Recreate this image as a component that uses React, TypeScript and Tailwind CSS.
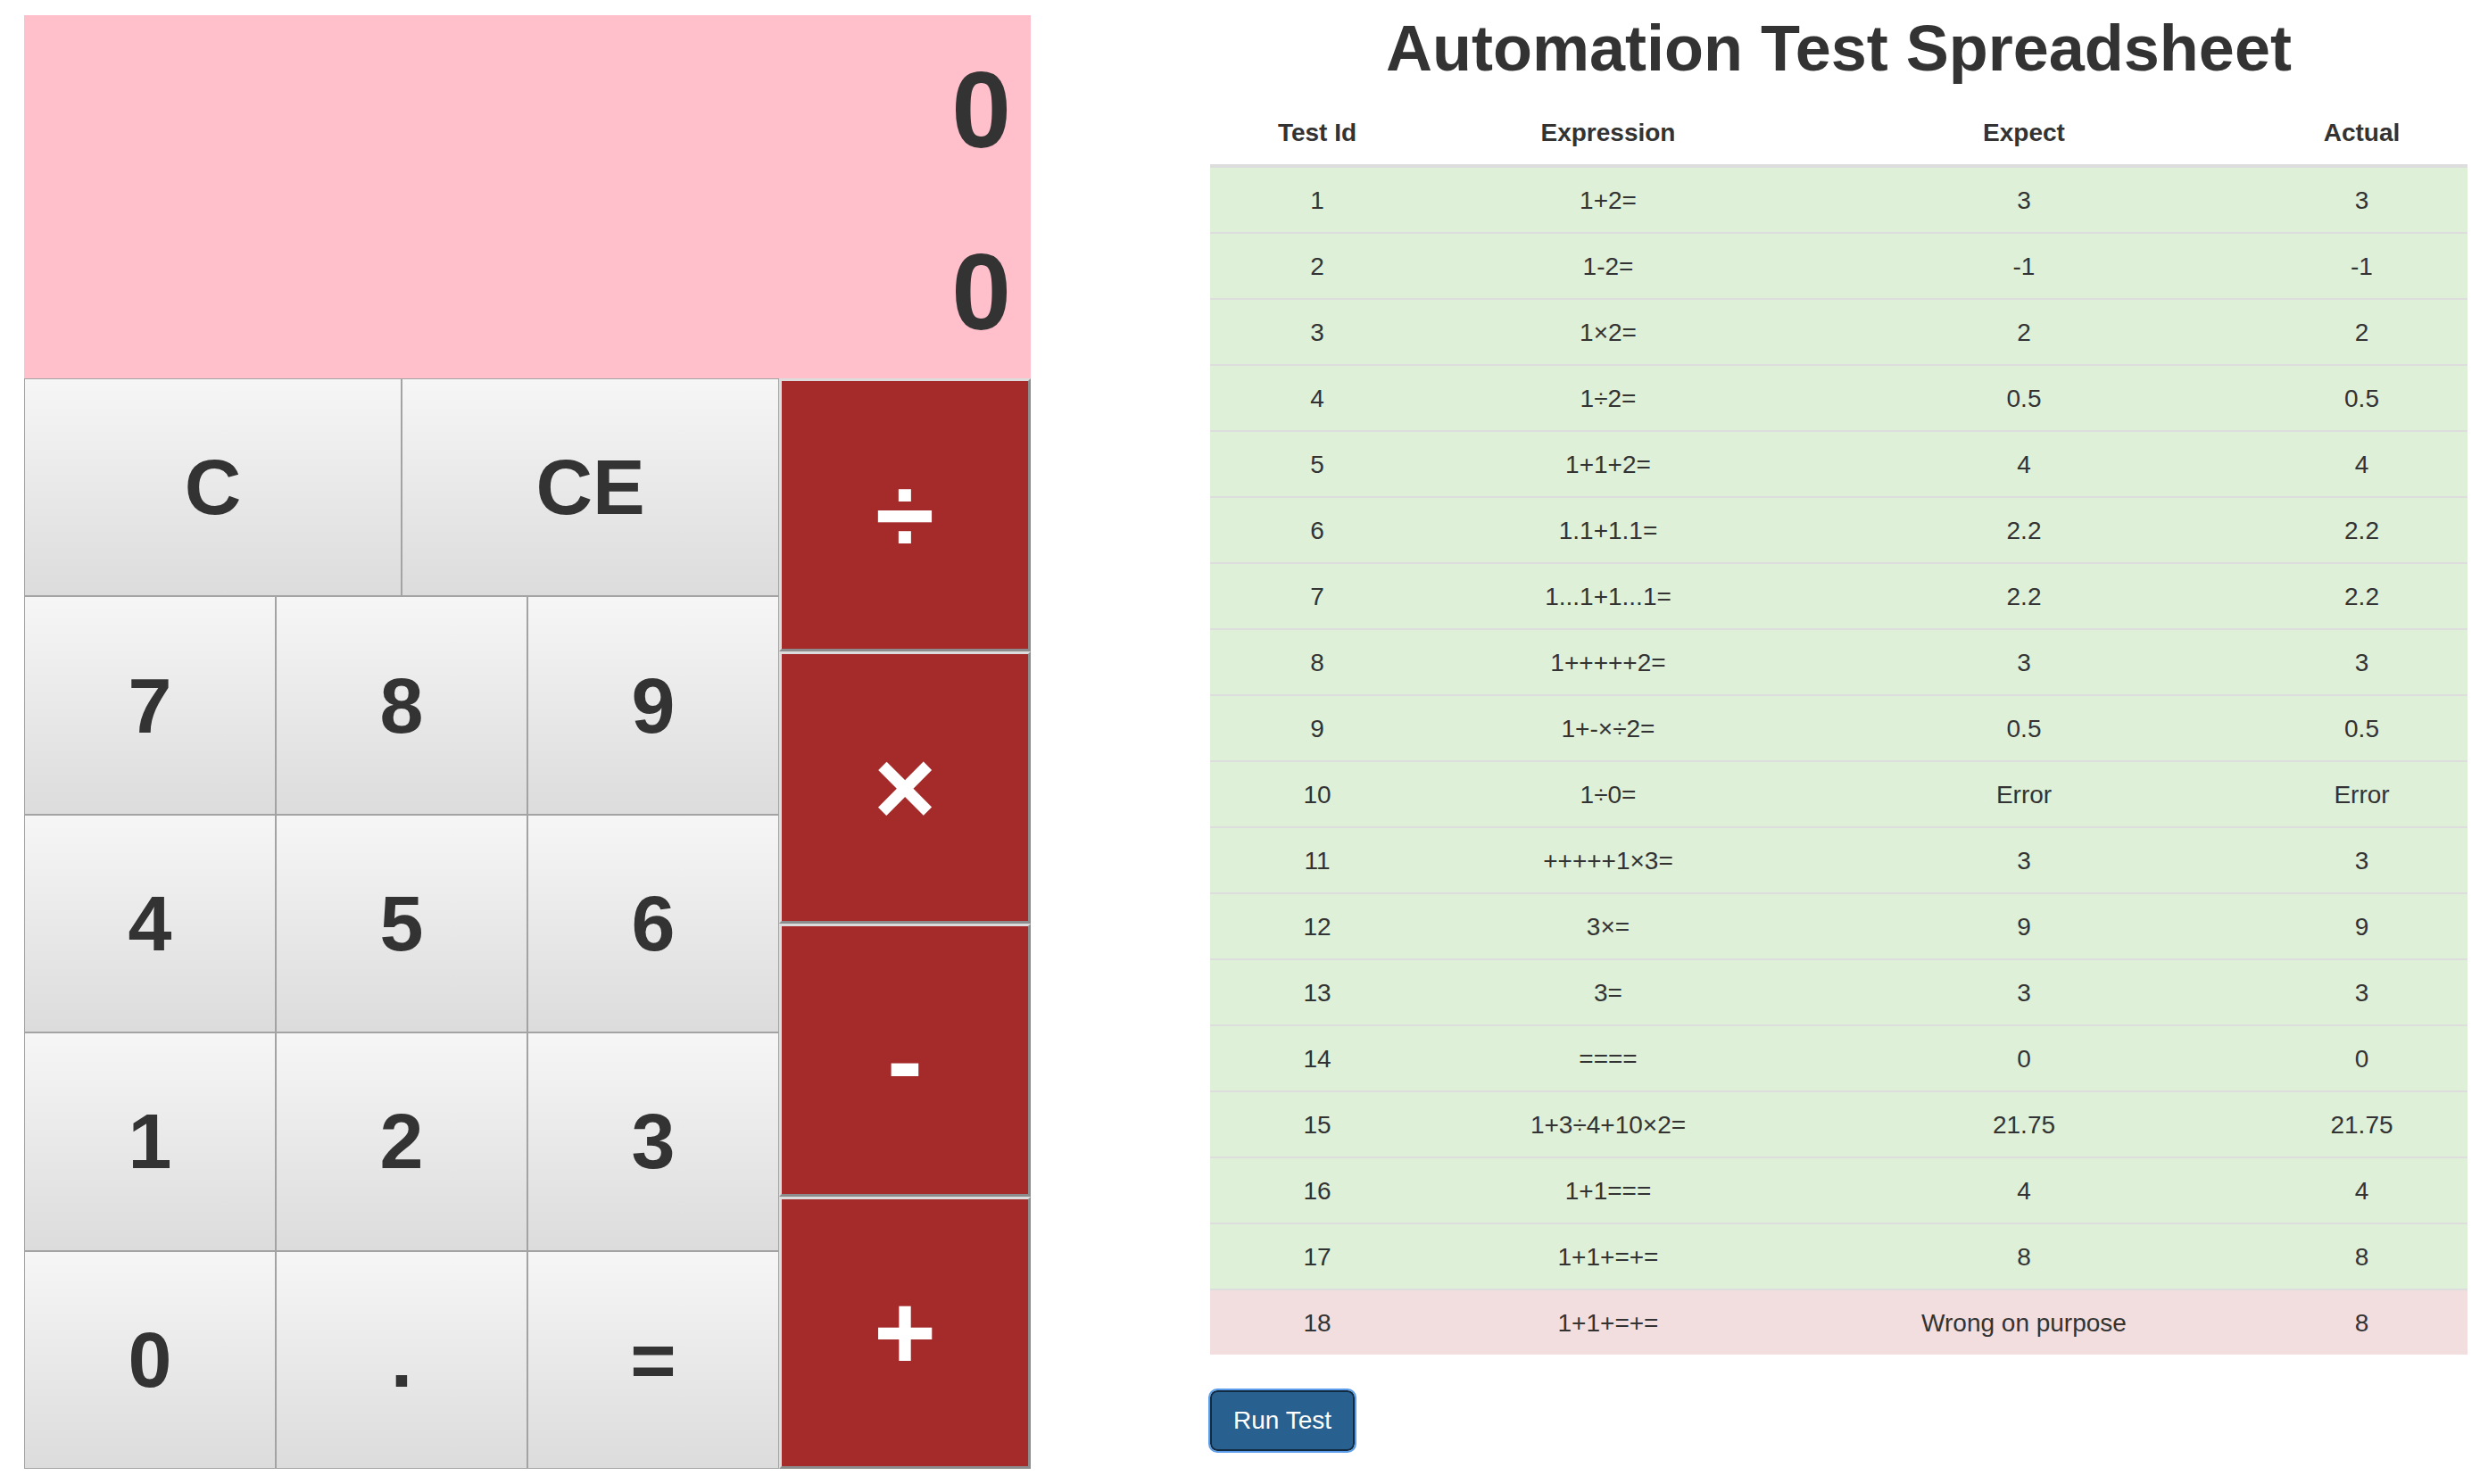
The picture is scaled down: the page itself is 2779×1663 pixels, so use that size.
const TESTS = [
  ['1', '1+2=', '3', '3'],
  ['2', '1-2=', '-1', '-1'],
  ['3', '1×2=', '2', '2'],
  ['4', '1÷2=', '0.5', '0.5'],
  ['5', '1+1+2=', '4', '4'],
  ['6', '1.1+1.1=', '2.2', '2.2'],
  ['7', '1...1+1...1=', '2.2', '2.2'],
  ['8', '1+++++2=', '3', '3'],
  ['9', '1+-×÷2=', '0.5', '0.5'],
  ['10', '1÷0=', 'Error', 'Error'],
  ['11', '+++++1×3=', '3', '3'],
  ['12', '3×=', '9', '9'],
  ['13', '3=', '3', '3'],
  ['14', '====', '0', '0'],
  ['15', '1+3÷4+10×2=', '21.75', '21.75'],
  ['16', '1+1===', '4', '4'],
  ['17', '1+1+=+=', '8', '8'],
  ['18', '1+1+=+=', 'Wrong on purpose', '8'],
];

const KEYS = [
  { label: 'C', wide: true },
  { label: 'CE', wide: true },
  { label: '7' },
  { label: '8' },
  { label: '9' },
  { label: '4' },
  { label: '5' },
  { label: '6' },
  { label: '1' },
  { label: '2' },
  { label: '3' },
  { label: '0' },
  { label: '.' },
  { label: '=' },
];

const OPERATORS = ['÷', '×', '-', '+'];

function Calculator() {
  return (
    <div className="w-[1128px] shrink-0 mt-[17px]">
      <div className="h-[407px] bg-[#ffc0cb] pt-[4px] pr-[22px] text-right text-[120px] font-bold leading-[204px] text-[#333]">
        <div>0</div>
        <div>0</div>
      </div>
      <div className="flex h-[1222px]">
        <div className="w-[846px] grid grid-cols-6 grid-rows-5">
          {KEYS.map((k) => (
            <button
              key={k.label}
              className={
                (k.wide ? 'col-span-3 ' : 'col-span-2 ') +
                'border border-[#a3a3a3] bg-gradient-to-b from-[#f6f6f6] to-[#dcdcdc] text-[88px] font-bold text-[#333] leading-none flex items-center justify-center'
              }
            >
              {k.label}
            </button>
          ))}
        </div>
        <div className="w-[282px] flex flex-col">
          {OPERATORS.map((op) => (
            <button
              key={op}
              className="flex-1 bg-[#a52a2a] border-[3px] border-t-[#dcdcdc] border-l-[#dcdcdc] border-r-[#8c8c8c] border-b-[#8c8c8c] text-white text-[120px] font-bold leading-none flex items-center justify-center"
            >
              {op}
            </button>
          ))}
        </div>
      </div>
    </div>
  );
}

function Spreadsheet() {
  return (
    <div className="w-[1409px] ml-[201px] shrink-0">
      <h1 className="mt-[15px] text-center text-[72px] font-bold leading-[79px] text-[#333]">
        Automation Test Spreadsheet
      </h1>
      <table className="mt-[18px] w-full border-collapse text-[28px] leading-[40px] text-[#333]">
        <thead>
          <tr>
            <th className="w-[240px] pt-[17px] pb-[15px] font-bold text-center border-b-4 border-[#ddd]">Test Id</th>
            <th className="w-[412px] pt-[17px] pb-[15px] font-bold text-center border-b-4 border-[#ddd]">Expression</th>
            <th className="w-[520px] pt-[17px] pb-[15px] font-bold text-center border-b-4 border-[#ddd]">Expect</th>
            <th className="w-[237px] pt-[17px] pb-[15px] font-bold text-center border-b-4 border-[#ddd]">Actual</th>
          </tr>
        </thead>
        <tbody>
          {TESTS.map((row, i) => {
            const ok = row[2] === row[3];
            return (
              <tr key={i} className={ok ? 'bg-[#dff0d8]' : 'bg-[#f2dede]'}>
                {row.map((cell, j) => (
                  <td key={j} className={'pt-[17px] pb-[15px] text-center border-[#ddd] ' + (i === 0 ? '' : 'border-t-2')}>
                    {cell}
                  </td>
                ))}
              </tr>
            );
          })}
        </tbody>
      </table>
      <button className="mt-[40px] w-[162px] h-[68px] rounded-lg bg-[#286090] border-2 border-[#122b40] outline-2 outline-[#5b9dea] text-white text-[28px] leading-[40px]">
        Run Test
      </button>
    </div>
  );
}

export default function App() {
  return (
    <div className="min-h-screen bg-white font-['Liberation_Sans',Arial,sans-serif] flex items-start pl-[27px]">
      <Calculator />
      <Spreadsheet />
    </div>
  );
}
